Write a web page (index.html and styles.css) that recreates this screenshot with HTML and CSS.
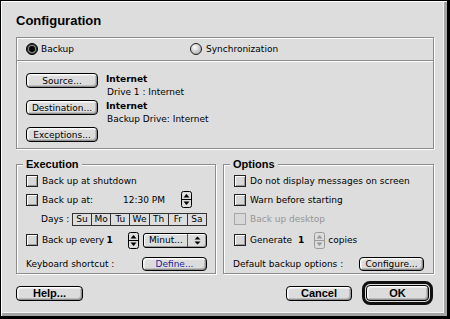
FILE: index.html
```html
<!DOCTYPE html>
<html lang="en">
<head>
    <meta charset="UTF-8">
    <title>Configuration</title>
    <link rel="stylesheet" href="styles.css">
</head>
<body>
    <div class="window">
        <h1 class="title">Configuration</h1>

        <div class="group top">
            <div class="mode">
                <label class="radio-item first">
                    <svg class="radio" width="12" height="12" viewBox="0 0 12 12">
                        <circle cx="6" cy="6" r="5.5" fill="#333" stroke="#000"/>
                        <circle cx="6" cy="6" r="4" fill="#8a8a8a"/>
                        <circle cx="6" cy="6" r="3" fill="#000"/>
                    </svg>
                    Backup
                </label>
                <label class="radio-item">
                    <svg class="radio" width="12" height="12" viewBox="0 0 12 12">
                        <defs>
                            <radialGradient id="rg" cx="0.4" cy="0.35" r="0.7">
                                <stop offset="0" stop-color="#fff"/>
                                <stop offset="1" stop-color="#a8a8a8"/>
                            </radialGradient>
                        </defs>
                        <circle cx="6" cy="6" r="5.5" fill="url(#rg)" stroke="#222"/>
                    </svg>
                    Synchronization
                </label>
            </div>
            <div class="targets">
                <div class="target">
                    <button class="btn wide">Source...</button>
                    <div class="info"><b>Internet</b><span>Drive 1 : Internet</span></div>
                </div>
                <div class="target">
                    <button class="btn wide">Destination...</button>
                    <div class="info"><b>Internet</b><span>Backup Drive: Internet</span></div>
                </div>
                <div class="target last">
                    <button class="btn wide">Exceptions...</button>
                </div>
            </div>
        </div>

        <div class="columns">
            <div class="group exec">
                <span class="legend">Execution</span>
                <div class="rows">
                    <div class="row r1">
                        <span class="check"></span>Back up at shutdown
                    </div>
                    <div class="row r2">
                        <span class="check"></span><span class="at-label">Back up at:</span>
                        <span class="time">12:30 PM</span>
                        <svg class="stepper time-step" width="11" height="17" viewBox="0 0 11 17">
                            <rect x="0.5" y="0.5" width="10" height="16" rx="2" fill="#ddd" stroke="#000"/>
                            <line x1="1" y1="8.5" x2="10" y2="8.5" stroke="#000"/>
                            <path d="M5.5 3 L8.5 6.5 H2.5 Z" fill="#000"/>
                            <path d="M2.5 10.5 H8.5 L5.5 14 Z" fill="#000"/>
                        </svg>
                    </div>
                    <div class="row r3">
                        <span class="days-label">Days :</span>
                        <div class="days">
                            <span>Su</span><span>Mo</span><span>Tu</span><span>We</span><span>Th</span><span>Fr</span><span>Sa</span>
                        </div>
                    </div>
                    <div class="row r4">
                        <span class="check"></span><span class="every">Back up every <b>1</b></span>
                        <svg class="stepper" width="11" height="17" viewBox="0 0 11 17">
                            <rect x="0.5" y="0.5" width="10" height="16" rx="2" fill="#ddd" stroke="#000"/>
                            <line x1="1" y1="8.5" x2="10" y2="8.5" stroke="#000"/>
                            <path d="M5.5 3 L8.5 6.5 H2.5 Z" fill="#000"/>
                            <path d="M2.5 10.5 H8.5 L5.5 14 Z" fill="#000"/>
                        </svg>
                        <div class="popup">
                            <span class="popup-val">Minut...</span>
                            <span class="popup-arrows">
                                <svg width="7" height="9" viewBox="0 0 7 9"><path d="M3.5 0.5 L6.5 3.5 H0.5 Z M0.5 5.5 H6.5 L3.5 8.5 Z" fill="#000"/></svg>
                            </span>
                        </div>
                    </div>
                    <div class="row r5">
                        <span class="shortcut-label">Keyboard shortcut :</span>
                        <button class="btn small define">Define...</button>
                    </div>
                </div>
            </div>

            <div class="group opts">
                <span class="legend">Options</span>
                <div class="rows">
                    <div class="row r1">
                        <span class="check"></span>Do not display messages on screen
                    </div>
                    <div class="row r2">
                        <span class="check"></span>Warn before starting
                    </div>
                    <div class="row r3 disabled">
                        <span class="check"></span>Back up desktop
                    </div>
                    <div class="row r4">
                        <span class="check"></span><span class="gen-label">Generate</span><b>1</b>
                        <svg class="stepper copies-step" width="11" height="17" viewBox="0 0 11 17">
                            <rect x="0.5" y="0.5" width="10" height="16" rx="2" fill="#ddd" stroke="#9a9a9a"/>
                            <line x1="1" y1="8.5" x2="10" y2="8.5" stroke="#9a9a9a"/>
                            <path d="M5.5 3 L8.5 6.5 H2.5 Z" fill="#9a9a9a"/>
                            <path d="M2.5 10.5 H8.5 L5.5 14 Z" fill="#9a9a9a"/>
                        </svg>
                        <span>copies</span>
                    </div>
                    <div class="row r5">
                        <span class="default-label">Default backup options :</span>
                        <button class="btn small">Configure...</button>
                    </div>
                </div>
            </div>
        </div>

        <div class="footer">
            <button class="btn bold help">Help...</button>
            <div class="footer-right">
                <button class="btn bold cancel">Cancel</button>
                <div class="default-ring">
                    <button class="btn bold ok">OK</button>
                </div>
            </div>
        </div>
    </div>
</body>
</html>
```

FILE: styles.css
```css
body {
    margin: 0;
    background-color: #000;
    font-family: "DejaVu Sans", sans-serif;
    font-size: 9px;
    color: #000;
}
.window {
    width: 450px;
    height: 319px;
    box-sizing: border-box;
    border: 1px solid #000;
    border-right-width: 3px;
    border-bottom-width: 3px;
    background-color: #dddddd;
    padding: 12px 13px 0 15px;
    box-shadow: inset 1px 1px 0 #fff, inset -3px -3px 0 #a4a4a4, inset -4px -4px 0 #f2f2f2;
}
.title {
    margin: 0 0 8px 0;
    font-family: "Liberation Sans", Arial, sans-serif;
    font-size: 13px;
    font-weight: bold;
    line-height: 16px;
}
b {
    font-weight: bold;
}

/* group boxes */
.group {
    position: relative;
    box-sizing: border-box;
    border: 1px solid #8c8c8c;
    box-shadow: inset 1px 1px 0 #fff, 1px 1px 0 #fff;
}
.top {
    height: 112px;
}
.mode {
    display: flex;
    align-items: center;
    height: 22px;
    padding-left: 9px;
    border-bottom: 1px solid #8c8c8c;
    box-shadow: 0 1px 0 #fff;
}
.radio-item {
    display: flex;
    align-items: center;
    gap: 4px;
}
.radio-item.first {
    width: 164px;
    gap: 3px;
}
.targets {
    padding: 12px 0 0 9px;
}
.target {
    display: flex;
    height: 27px;
}
.target.last {
    height: 15px;
}
.info {
    display: flex;
    flex-direction: column;
    margin-left: 8px;
}
.info b {
    line-height: 12px;
}
.info span {
    line-height: 14px;
    padding-left: 1px;
}

/* buttons */
.btn {
    font-family: "DejaVu Sans", sans-serif;
    font-size: 9px;
    color: #000;
    height: 15px;
    padding: 0;
    border: 1px solid #000;
    border-radius: 4px;
    background-color: #dcdcdc;
    box-shadow: inset 1px 1px 0 #fff, inset -1px -1px 0 #8f8f8f, inset 2px 2px 0 #ececec, inset -2px -2px 0 #bdbdbd;
    line-height: 12px;
}
.btn.wide {
    width: 72px;
}
.btn.small {
    width: 65px;
    height: 14px;
}
.btn.define {
    color: #1c1ca0;
}
.btn.bold {
    font-family: "Liberation Sans", Arial, sans-serif;
    font-size: 11px;
    font-weight: bold;
}

/* two columns */
.columns {
    display: flex;
    gap: 7px;
    margin-top: 15px;
}
.exec,
.opts {
    height: 110px;
}
.exec {
    width: 200px;
}
.opts {
    width: 211px;
}
.legend {
    position: absolute;
    top: -7px;
    left: 6px;
    padding: 0 3px;
    background-color: #dddddd;
    font-family: "Liberation Sans", Arial, sans-serif;
    font-size: 11px;
    font-weight: bold;
    line-height: 12px;
}
.rows {
    display: flex;
    flex-direction: column;
    padding: 7px 0 0 9px;
}
.opts .rows {
    padding-left: 10px;
}
.row {
    display: flex;
    align-items: center;
    white-space: nowrap;
}
.r1 { height: 18px; }
.r2 { height: 19px; }
.r3 { height: 20px; }
.r4 { height: 22px; }
.r5 { height: 22px; padding-top: 2px; }

.check {
    width: 12px;
    height: 12px;
    box-sizing: border-box;
    margin-right: 4px;
    border: 1px solid #222;
    background-color: #d8d8d8;
    box-shadow: inset 1px 1px 0 #fff, inset -1px -1px 0 #9a9a9a;
    flex-shrink: 0;
}
.disabled {
    color: #959595;
}
.disabled .check {
    border-color: #a6a6a6;
    box-shadow: none;
}
.at-label {
    width: 81px;
}
.time {
    width: 42px;
}
.time-step {
    margin-left: 16px;
}
.days-label {
    width: 31px;
    margin-left: 15px;
}
.days {
    display: flex;
    width: 135px;
    height: 13px;
    box-sizing: border-box;
    border: 1px solid #333;
}
.days span {
    flex: 1;
    text-align: center;
    line-height: 11px;
    border-left: 1px solid #333;
}
.days span:first-child {
    border-left: none;
}
.every {
    width: 86px;
    letter-spacing: -0.2px;
}
.popup {
    display: flex;
    width: 64px;
    height: 15px;
    box-sizing: border-box;
    margin-left: 4px;
    border: 1px solid #000;
    border-radius: 3px;
    background-color: #dcdcdc;
    box-shadow: inset 1px 1px 0 #fff, inset -1px -1px 0 #9a9a9a;
}
.popup-val {
    flex: 1;
    padding-left: 5px;
    line-height: 13px;
}
.popup-arrows {
    display: flex;
    align-items: center;
    justify-content: center;
    width: 18px;
    border-left: 1px solid #555;
}
.shortcut-label {
    width: 116px;
}
.gen-label {
    width: 48px;
}
.copies-step {
    margin: 0 3px 0 10px;
}
.default-label {
    width: 126px;
    margin-left: -1px;
}

/* bottom buttons */
.footer {
    display: flex;
    justify-content: space-between;
    align-items: center;
    height: 24px;
    margin-top: 7px;
    padding-right: 1px;
}
.help {
    width: 67px;
}
.footer-right {
    display: flex;
    align-items: center;
    gap: 10px;
}
.cancel {
    width: 66px;
}
.default-ring {
    display: flex;
    width: 71px;
    height: 24px;
    box-sizing: border-box;
    padding: 1px;
    border: 3px solid #111;
    border-radius: 8px;
}
.ok {
    width: 100%;
    height: 100%;
}
```
